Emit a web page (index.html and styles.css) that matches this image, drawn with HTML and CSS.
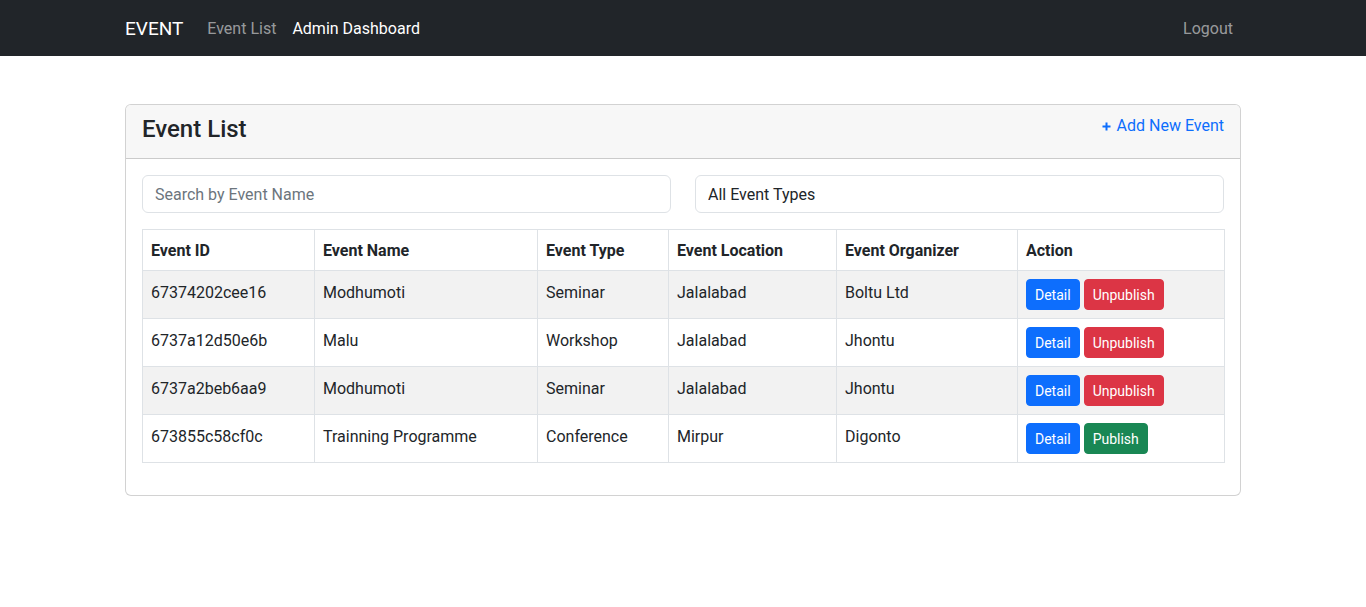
FILE: index.html
```html
<!DOCTYPE html>
<html lang="en">
<head>
<meta charset="utf-8">
<title>Event List</title>
<link rel="stylesheet" href="styles.css">
</head>
<body>
<nav class="navbar">
  <div class="nav-inner">
    <a class="brand" href="#">EVENT</a>
    <div class="nav-links">
      <a class="nav-link" href="#">Event List</a>
      <a class="nav-link active" href="#">Admin Dashboard</a>
    </div>
    <a class="nav-link logout" href="#">Logout</a>
  </div>
</nav>

<main class="container">
  <section class="card">
    <header class="card-header">
      <h4 class="card-title">Event List</h4>
      <a class="add-link" href="#"><svg class="plus" width="9" height="9" viewBox="0 0 9 9"><path d="M4.5 0.5v8M0.5 4.5h8" stroke="currentColor" stroke-width="2" fill="none"/></svg>Add New Event</a>
    </header>
    <div class="card-body">
      <div class="filters">
        <input class="form-control" type="text" placeholder="Search by Event Name">
        <select class="form-control select">
          <option>All Event Types</option>
        </select>
      </div>
      <table class="table">
        <colgroup>
          <col class="c1"><col class="c2"><col class="c3"><col class="c4"><col class="c5"><col class="c6">
        </colgroup>
        <thead>
          <tr><th>Event ID</th><th>Event Name</th><th>Event Type</th><th>Event Location</th><th>Event Organizer</th><th>Action</th></tr>
        </thead>
        <tbody>
          <tr class="striped"><td>67374202cee16</td><td>Modhumoti</td><td>Seminar</td><td>Jalalabad</td><td>Boltu Ltd</td><td class="actions"><button class="btn btn-primary">Detail</button><button class="btn btn-danger">Unpublish</button></td></tr>
          <tr><td>6737a12d50e6b</td><td>Malu</td><td>Workshop</td><td>Jalalabad</td><td>Jhontu</td><td class="actions"><button class="btn btn-primary">Detail</button><button class="btn btn-danger">Unpublish</button></td></tr>
          <tr class="striped"><td>6737a2beb6aa9</td><td>Modhumoti</td><td>Seminar</td><td>Jalalabad</td><td>Jhontu</td><td class="actions"><button class="btn btn-primary">Detail</button><button class="btn btn-danger">Unpublish</button></td></tr>
          <tr><td>673855c58cf0c</td><td>Trainning Programme</td><td>Conference</td><td>Mirpur</td><td>Digonto</td><td class="actions"><button class="btn btn-primary">Detail</button><button class="btn btn-success">Publish</button></td></tr>
        </tbody>
      </table>
    </div>
  </section>
</main>
</body>
</html>
```
FILE: styles.css
```css
*{box-sizing:border-box;}
html,body{margin:0;padding:0;}
body{font-family:Roboto,"Liberation Sans",sans-serif;font-size:16px;line-height:1.5;color:#212529;background:#fff;}
a{text-decoration:none;}

.navbar{background:#212529;height:56px;}
.nav-inner{width:1140px;margin:0 auto;padding:2px 12px 0;height:56px;display:flex;align-items:center;}
.brand{color:#fff;font-size:19px;line-height:30px;margin-right:16px;}
.nav-links{display:flex;flex:1;}
.nav-link{color:rgba(255,255,255,.55);padding:8px;font-size:16px;line-height:24px;}
.nav-link.active{color:#fff;}
.logout{padding-right:8px;}

.container{width:1140px;margin:48px auto 0;padding:0 12px;}
.card{border:1px solid rgba(0,0,0,.175);border-radius:6px;background:#fff;}
.card-header{background:#f7f7f7;border-bottom:1px solid rgba(0,0,0,.175);padding:8px 16px;display:flex;justify-content:space-between;align-items:flex-start;border-radius:5px 5px 0 0;}
.card-title{margin:0 0 6px;padding-top:2px;font-size:24px;font-weight:500;line-height:1.2;}
.add-link{color:#0d6efd;display:flex;align-items:center;gap:6px;line-height:24px;margin-top:1px;}
.plus{margin-top:1px;}
.card-body{padding:16px;}

.filters{display:grid;grid-template-columns:1fr 1fr;column-gap:24px;margin-bottom:16px;}
.form-control{display:block;width:100%;height:38px;padding:7px 12px 5px;font:inherit;font-size:16px;line-height:24px;color:#212529;background:#fff;border:1px solid #dee2e6;border-radius:6px;outline:none;}
.form-control::placeholder{color:#6c757d;opacity:1;}
.select{appearance:none;-webkit-appearance:none;}

.table{width:100%;border-collapse:collapse;table-layout:fixed;margin-bottom:16px;}
.c1{width:172px;}.c2{width:223px;}.c3{width:131px;}.c4{width:168px;}.c5{width:181px;}.c6{width:207px;}
.table th,.table td{border:1px solid #dee2e6;padding:9px 8px 7px;text-align:left;vertical-align:top;line-height:24px;}
.table th{font-weight:700;}
.table td{padding-top:10px;padding-bottom:6px;}
.table td.actions{padding-top:8px;padding-bottom:8px;}
.striped td{background:#f2f2f2;}

.btn{font-family:inherit;font-size:14px;line-height:21px;padding:5px 8px 3px;border:1px solid transparent;border-radius:4px;color:#fff;cursor:pointer;margin-right:4px;vertical-align:top;}
.btn-primary{background:#0d6efd;border-color:#0d6efd;}
.btn-danger{background:#dc3545;border-color:#dc3545;}
.btn-success{background:#198754;border-color:#198754;}
```
